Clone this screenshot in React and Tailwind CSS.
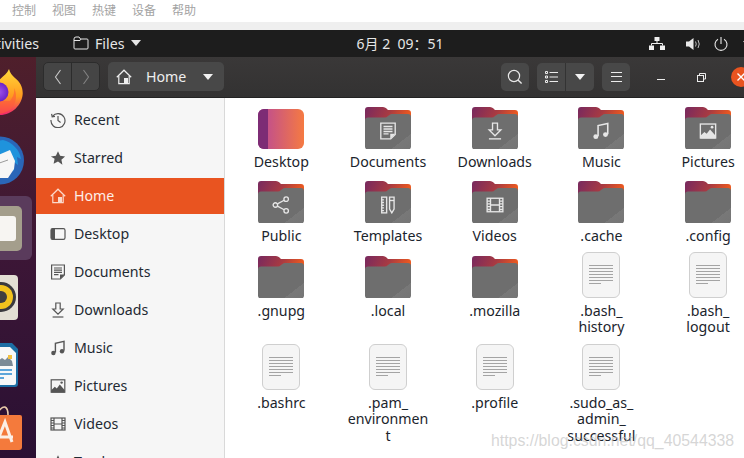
import React from "react";

const fontUi = { fontFamily: '"Noto Sans", "Noto Sans CJK SC", sans-serif' };

// symbolic glyphs, shared by sidebar and folders (16x16 box)
const Glyph = ({ name, size = 16, color = "#555" }) => {
  const s = { fill: "none", stroke: color, strokeWidth: 1.2 };
  const f = { fill: color };
  return (
    <svg width={size} height={size} viewBox="0 0 16 16">
      {name === "recent" && (
        <g {...s}>
          <path d="M2.6 4.2A7 7 0 1 1 1 8" />
          <path d="M1.6 1.8 2.2 4.8 5 4.4" />
          <path d="M8 4v4.4l2.6 2" />
        </g>
      )}
      {name === "star" && <path {...f} d="M8 1.2l2.1 4.6 5 .6-3.7 3.4 1 5L8 11.4l-4.4 2.4 1-5L.9 6.4l5-.6z" />}
      {name === "home" && (
        <g {...s}>
          <path d="M.8 8.2 8 1.2l7.2 7" />
          <path d="M2.8 7v7.6h10.4V7" />
          <path {...f} stroke="none" d="M8 9h4v5.6H8z" />
        </g>
      )}
      {name === "desktop" && (
        <g>
          <rect x="1" y="2.6" width="14" height="10.8" rx="1.6" {...s} />
          <path {...f} d="M1 4.2a1.6 1.6 0 0 1 1.6-1.6H5v10.8H2.6A1.6 1.6 0 0 1 1 11.8z" />
        </g>
      )}
      {name === "documents" && (
        <g {...s}>
          <path d="M1.6 1h12.8v10L10.4 15H1.6z" />
          <path d="M4 4h8M4 6.2h8M4 8.4h8M4 10.6h4.5" />
          <path {...f} stroke="none" d="M10 15v-4.6h4.4z" />
        </g>
      )}
      {name === "downloads" && (
        <g {...s}>
          <path d="M5.8 1h4.4v6h3L8 12.2 2.8 7h3z" />
          <path d="M2.6 15h10.8" />
        </g>
      )}
      {name === "music" && (
        <g>
          <path {...s} strokeWidth="1.4" d="M5.4 12.6V3.2L14 1.4v9.4" />
          <circle cx="3.4" cy="13" r="2.2" {...f} />
          <circle cx="12" cy="11.2" r="2.2" {...f} />
        </g>
      )}
      {name === "pictures" && (
        <g>
          <rect x="1.2" y="1.8" width="13.6" height="12.4" fill="none" stroke={color} strokeWidth="1.2" />
          <path {...f} d="M1.2 14.6v-2.4l3.6-3.4 2 1.6L9.8 6.6l5 5.6v2.4z" />
          <circle cx="11.6" cy="4.6" r="1.2" {...f} />
        </g>
      )}
      {name === "videos" && (
        <g {...s}>
          <rect x="1" y="2" width="14" height="12" />
          <path d="M4 2v12M12 2v12M4 8h8M1 4.5h3M1 7h3M1 9.5h3M1 12h3M12 4.5h3M12 7h3M12 9.5h3M12 12h3" />
        </g>
      )}
      {name === "share" && (
        <g {...s}>
          <circle cx="3" cy="8" r="2" />
          <circle cx="12.6" cy="2.8" r="2" />
          <circle cx="12.6" cy="13.2" r="2" />
          <path d="M4.8 7 10.8 3.8M4.8 9l6 3.2" />
        </g>
      )}
      {name === "templates" && (
        <g {...s}>
          <rect x="2.4" y="1" width="4.4" height="14" />
          <path d="M2.4 3.4h2M2.4 5.8h2M2.4 8.2h2M2.4 10.6h2M2.4 13h2" />
          <path d="M9.4 1h4v10.6l-2 3.4-2-3.4z" />
          <path d="M9.4 4h4" />
        </g>
      )}
    </svg>
  );
};

const Folder = ({ glyph }) => (
  <div className="relative w-[46px] h-[42px]">
    <svg width="46" height="42" viewBox="0 0 46 42" className="block">
      <defs>
        <linearGradient id="folderBack" x1="0" y1="0" x2="1" y2="0.25">
          <stop offset="0" stopColor="#77295f" />
          <stop offset="0.55" stopColor="#a83a42" />
          <stop offset="1" stopColor="#ee5a1e" />
        </linearGradient>
        <linearGradient id="folderFront" x1="0" y1="0" x2="1" y2="1">
          <stop offset="0.78" stopColor="#6e6e6e" />
          <stop offset="0.78" stopColor="#787878" />
          <stop offset="1" stopColor="#757575" />
        </linearGradient>
      </defs>
      <path fill="url(#folderBack)" d="M3 0h15q2 0 3.5 1.5L23 3h20q3 0 3 3v18H0V3q0-3 3-3z" />
      <path fill="url(#folderFront)" d="M3 10.500h17q1.500 0 3-1.500l1.500-1q1-1 2.500-1H43q3 0 3 3v29.500q0 3-3 3H3q-3 0-3-3V13.500q0-3 3-3z" />
    </svg>
    {glyph && (
      <div className="absolute left-0 right-0 top-[15px] flex justify-center">
        <Glyph name={glyph} size={18} color="#e6e6e6" />
      </div>
    )}
  </div>
);

const DesktopFolder = () => (
  <svg width="46" height="42" viewBox="0 0 46 42" className="block">
    <defs>
      <linearGradient id="deskGrad" x1="0" y1="0" x2="1" y2="0">
        <stop offset="0" stopColor="#b8479a" />
        <stop offset="1" stopColor="#f57a42" />
      </linearGradient>
      <clipPath id="deskClip">
        <rect x="0" y="2" width="46" height="40" rx="6" />
      </clipPath>
    </defs>
    <g clipPath="url(#deskClip)">
      <rect x="0" y="2" width="46" height="40" fill="url(#deskGrad)" />
      <rect x="0" y="2" width="10" height="40" fill="#7d2c75" />
    </g>
  </svg>
);

const FileIcon = () => (
  <div className="w-[38px] h-[46px] rounded-[6px] bg-[#f5f5f5] border border-[#cfcfcf] flex flex-col gap-[2px] pt-[12px] px-[6px]">
    {[0, 1, 2, 3, 4, 5].map((i) => (
      <div key={i} className="h-px w-full bg-[#a4a4a4]" />
    ))}
    <div className="h-px w-[12px] bg-[#a4a4a4]" />
  </div>
);

const items = [
  { lines: ["Desktop"], type: "desktop" },
  { lines: ["Documents"], type: "folder", glyph: "documents" },
  { lines: ["Downloads"], type: "folder", glyph: "downloads" },
  { lines: ["Music"], type: "folder", glyph: "music" },
  { lines: ["Pictures"], type: "folder", glyph: "pictures" },
  { lines: ["Public"], type: "folder", glyph: "share" },
  { lines: ["Templates"], type: "folder", glyph: "templates" },
  { lines: ["Videos"], type: "folder", glyph: "videos" },
  { lines: [".cache"], type: "folder" },
  { lines: [".config"], type: "folder" },
  { lines: [".gnupg"], type: "folder" },
  { lines: [".local"], type: "folder" },
  { lines: [".mozilla"], type: "folder" },
  { lines: [".bash_", "history"], type: "file" },
  { lines: [".bash_", "logout"], type: "file" },
  { lines: [".bashrc"], type: "file" },
  { lines: [".pam_", "environmen", "t"], type: "file" },
  { lines: [".profile"], type: "file" },
  { lines: [".sudo_as_", "admin_", "successful"], type: "file" },
];

const places = [
  { name: "Recent", icon: "recent" },
  { name: "Starred", icon: "star" },
  { name: "Home", icon: "home", active: true },
  { name: "Desktop", icon: "desktop" },
  { name: "Documents", icon: "documents" },
  { name: "Downloads", icon: "downloads" },
  { name: "Music", icon: "music" },
  { name: "Pictures", icon: "pictures" },
  { name: "Videos", icon: "videos" },
  { name: "Trash", icon: "star" },
];

const Caret = ({ color = "#f2f2f2", w = 10 }) => (
  <svg width={w} height="6" viewBox="0 0 10 6">
    <path d="M0 0h10L5 6z" fill={color} />
  </svg>
);

const Dock = () => (
  <div className="w-[36px] shrink-0 flex flex-col bg-gradient-to-b from-[#4f1f2b] via-[#3c1636] to-[#2a1033] overflow-hidden">
    <svg width="36" height="68" viewBox="0 0 36 68" className="shrink-0">
      <defs>
        <linearGradient id="ffox" x1="0" y1="0" x2="0" y2="1">
          <stop offset="0" stopColor="#ffd93a" />
          <stop offset="0.6" stopColor="#ff9a1f" />
          <stop offset="1" stopColor="#f0256e" />
        </linearGradient>
        <radialGradient id="ffoxBall">
          <stop offset="0" stopColor="#a052ea" />
          <stop offset="1" stopColor="#6a23c8" />
        </radialGradient>
      </defs>
      <path fill="url(#ffox)" d="M-2 24C2 20 7 17 9 12C10 16 12 18 15 21C20 25 23 30 22.700 37C22 48 12 58 0 58H-2z" />
      <path fill="#ff5a3a" d="M-2 44H10C13 40 15 36 14 31C18 38 16 50 8 54Q3 57-2 57z" opacity="0.6" />
      <circle cx="-1" cy="35" r="9.500" fill="url(#ffoxBall)" />
    </svg>
    <svg width="36" height="68" viewBox="0 0 36 68" className="shrink-0">
      <circle cx="0" cy="35.500" r="24" fill="#2a66b8" />
      <path fill="#1f93dc" d="M3 15C12 17 20 25 21 34L17 32 18 40 14 37 14 46 8 42 -2 52V16z" />
      <path fill="#f6f6f6" d="M-2 30 10 25 15 36 14 44 8 53H-2z" />
      <path d="M-2 38.500 8 35" stroke="#9a9a9a" strokeWidth="1" />
    </svg>
    <div className="w-[32px] h-[64px] mt-[3px] mb-[1px] shrink-0 bg-[#5a3b5c] rounded-r-[6px] overflow-hidden flex items-center">
      <div className="w-[22px] h-[45px] shrink-0 bg-[#a49e8c] rounded-r-[5px] flex items-center">
        <div className="w-[16px] h-[25px] bg-[#f7f5f2] rounded-r-[3px]" />
      </div>
    </div>
    <svg width="36" height="68" viewBox="0 0 36 68" className="shrink-0">
      <rect x="-20" y="14" width="38" height="45" rx="4" fill="#e3dfd4" />
      <circle cx="1" cy="36" r="15" fill="#3a3a3e" />
      <circle cx="1" cy="36" r="12" fill="#f2c31d" />
      <circle cx="1" cy="36" r="6" fill="#3f3f3f" />
    </svg>
    <svg width="36" height="68" viewBox="0 0 36 68" className="shrink-0">
      <path fill="#1c6ea4" d="M-3 14H12l6 6v35q0 3-3 3H-3z" />
      <path fill="#f7f8f8" d="M-3 18H10l6 6v30q0 2-2 2H-3z" />
      <path fill="#7a8a96" d="M-3 37V33L2 29l3 2 3-3 4 4 1 5z" />
      <rect x="8" y="26" width="4" height="4" fill="#f2c040" />
      <path d="M-3 41h15M-3 45h15M-3 49h7" stroke="#2a8ad0" strokeWidth="1.600" />
    </svg>
    <svg width="36" height="68" viewBox="0 0 36 68" className="shrink-0">
      <path d="M-4 18C4 5 8 10 8 18" fill="none" stroke="#e8c9a8" strokeWidth="1.600" />
      <path fill="#f47a3c" d="M-4 18H20q2 0 2 2v30q0 3-3 3H-4z" />
      <path d="M-3 45 5 25l7 20M-3 40h16" fill="none" stroke="#fbeee6" strokeWidth="3" />
    </svg>
  </div>
);

const NavChevron = ({ d, color }) => (
  <svg width="8" height="16" viewBox="0 0 8 16">
    <path d={d} fill="none" stroke={color} strokeWidth="1.1" />
  </svg>
);

const HeaderBar = () => (
  <div className="h-[41px] shrink-0 flex items-center pl-[7px] pb-[1px] bg-gradient-to-b from-[#3a3838] to-[#333232] border-b border-[#232323] overflow-hidden">
    <div className="w-[57px] h-[29px] shrink-0 flex rounded-[5px] border border-[#2c2c2c] bg-[#454545]">
      <div className="w-[28px] flex items-center justify-center border-r border-[#2c2c2c]">
        <NavChevron d="M6.500 1 1.500 8l5 7" color="#c8c8c8" />
      </div>
      <div className="flex-1 flex items-center justify-center">
        <NavChevron d="M1.500 1l5 7-5 7" color="#828282" />
      </div>
    </div>
    <div className="ml-[8px] w-[116px] h-[29px] shrink-0 rounded-[5px] bg-[#484848] flex items-center pl-[8px] text-[#eeeeee] text-[14.200px]">
      <Glyph name="home" size={16} color="#eeeeee" />
      <span className="ml-[14px]">Home</span>
      <span className="ml-auto mr-[11px] flex">
        <Caret />
      </span>
    </div>
    <div className="w-[277px] shrink-0" />
    <div className="w-[28px] h-[28px] shrink-0 rounded-[5px] bg-[#484848] flex items-center justify-center">
      <svg width="16" height="16" viewBox="0 0 16 16">
        <circle cx="7" cy="7" r="5.600" fill="none" stroke="#e8e8e8" strokeWidth="1.200" />
        <path d="M11 11l3.600 3.600" stroke="#e8e8e8" strokeWidth="1.400" />
      </svg>
    </div>
    <div className="ml-[8px] w-[57px] h-[28px] shrink-0 rounded-[5px] bg-[#484848] flex">
      <div className="w-[29px] flex items-center justify-center border-r border-[#333]">
        <svg width="13" height="12" viewBox="0 0 13 12">
          <path d="M4.500 1.500H13M4.500 6H13M4.500 10.500H13" stroke="#ececec" strokeWidth="1.100" />
          <path d="M.5 .5h2v2h-2zM.5 5h2v2h-2zM.5 9.500h2v2h-2z" fill="none" stroke="#ececec" />
        </svg>
      </div>
      <div className="flex-1 flex items-center justify-center">
        <Caret />
      </div>
    </div>
    <div className="ml-[8px] w-[28px] h-[28px] shrink-0 rounded-[5px] bg-[#484848] flex flex-col gap-[3.500px] items-center justify-center">
      <div className="w-[11px] h-px bg-[#ececec]" />
      <div className="w-[11px] h-px bg-[#ececec]" />
      <div className="w-[11px] h-px bg-[#ececec]" />
    </div>
    <div className="ml-[11px] w-[40px] h-[28px] shrink-0 flex items-center justify-center">
      <div className="w-[8px] h-[1.500px] bg-[#ececec] mt-[6px]" />
    </div>
    <div className="w-[40px] h-[28px] shrink-0 flex items-center justify-center">
      <svg width="9" height="9" viewBox="0 0 9 9" className="mt-[1px]">
        <path d="M2.500 2.500V.5h6v5.500H6.500" fill="none" stroke="#ececec" />
        <rect x=".5" y="2.500" width="6" height="6" fill="none" stroke="#ececec" />
      </svg>
    </div>
    <div className="ml-[10px] w-[20px] h-[20px] shrink-0 rounded-full bg-[#e95420] flex items-center justify-center">
      <svg width="8" height="8" viewBox="0 0 8 8">
        <path d="M.5 .5l7 7M7.500 .5l-7 7" stroke="#fff" strokeWidth="1.400" />
      </svg>
    </div>
  </div>
);

const Sidebar = () => (
  <div className="w-[189px] shrink-0 bg-[#f6f6f6] border-r border-[#d9d9d9] pt-[4px] flex flex-col gap-[2px] overflow-hidden">
    {places.map((p) => (
      <div
        key={p.name}
        className={
          p.active
            ? "h-[36px] shrink-0 flex items-center pl-[14px] gap-[8px] bg-[#e95420] text-[#fdeee8]"
            : "h-[36px] shrink-0 flex items-center pl-[14px] gap-[8px] text-[#1f2a33]"
        }
      >
        <Glyph name={p.icon} color={p.active ? "#fbd9cb" : "#555"} />
        <span className="text-[14.200px]">{p.name}</span>
      </div>
    ))}
  </div>
);

const Grid = () => (
  <div className="flex-1 bg-white pl-[3px] pt-[5px] overflow-hidden">
    <div className="grid grid-cols-[repeat(5,106.700px)] grid-rows-[74px_75px_92px_auto] w-[534px]">
      {items.map((it) => (
        <div key={it.lines.join("")} className="flex flex-col items-center">
          <div className="h-[46px] flex items-end justify-center">
            {it.type === "desktop" && <DesktopFolder />}
            {it.type === "folder" && <Folder glyph={it.glyph} />}
            {it.type === "file" && <FileIcon />}
          </div>
          <div className="mt-[4.500px] text-center text-[14.200px] leading-[16.700px] text-[#1b242c] whitespace-nowrap">
            {it.lines.map((l) => (
              <div key={l}>{l}</div>
            ))}
          </div>
        </div>
      ))}
    </div>
  </div>
);

export default function App() {
  return (
    <div className="relative w-[744px] h-[458px] overflow-hidden flex flex-col bg-white" style={fontUi}>
      <div className="h-[22px] shrink-0 bg-white flex items-center gap-[16px] pl-[12px] text-[12px] text-[#a3a3a3]">
        <span>控制</span>
        <span>视图</span>
        <span>热键</span>
        <span>设备</span>
        <span>帮助</span>
      </div>
      <div className="h-[8px] shrink-0 bg-[#efefef]" />
      <div className="h-[27px] shrink-0 bg-[#1d1d1d] flex items-center text-[14.200px] text-[#e6e6e6]">
        <div className="w-[350px] shrink-0 flex items-center">
          <div className="w-[39px] flex justify-end overflow-hidden">
            <span className="shrink-0">Activities</span>
          </div>
          <svg width="16" height="14" viewBox="0 0 16 14" className="ml-[34px]">
            <path d="M1 3q0-2 2-2h3l1.500 2H14q1 0 1 1v8q0 1-1 1H2q-1 0-1-1z" fill="none" stroke="#e6e6e6" strokeWidth="1" />
            <path d="M1 4.500h6l1-1.500" fill="none" stroke="#e6e6e6" strokeWidth="1" />
          </svg>
          <span className="ml-[6px]">Files</span>
          <span className="ml-[7px] flex">
            <Caret color="#e6e6e6" />
          </span>
        </div>
        <div className="w-[100px] shrink-0 text-center whitespace-pre text-[14px]">6月 2  09：51</div>
        <div className="ml-[199px] shrink-0 flex items-center">
          <svg width="16" height="13" viewBox="0 0 16 13">
            <path d="M5.500 0h5v4h-5zM0 8.500h5V13H0zM11 8.500h5V13h-5z" fill="#f0f0f0" />
            <path d="M8 4v2.500M2.500 8.500V6.500h11v2" fill="none" stroke="#f0f0f0" />
          </svg>
          <svg width="15" height="14" viewBox="0 0 15 14" className="ml-[21px]">
            <path d="M0 4.500h3L7.500 1v12L3 9.500H0z" fill="#e8e8e8" />
            <path d="M9.500 4.500q1.500 2.500 0 5M12 3q2.500 4 0 8" fill="none" stroke="#bdbdbd" />
          </svg>
          <svg width="14" height="14" viewBox="0 0 14 14" className="ml-[13px]">
            <path d="M4 2.200a6 6 0 1 0 6 0M7 0v7" fill="none" stroke="#e8e8e8" strokeWidth="1.100" />
          </svg>
          <span className="ml-[15px] flex">
            <Caret color="#e8e8e8" />
          </span>
        </div>
      </div>
      <div className="flex-1 flex min-h-0">
        <Dock />
        <div className="flex-1 min-w-0 flex flex-col">
          <HeaderBar />
          <div className="flex-1 flex min-h-0">
            <Sidebar />
            <Grid />
          </div>
        </div>
      </div>
      <div
        className="absolute left-[491px] top-[431px] text-[15.850px] leading-[20px] text-[#c4c4c4]/70 whitespace-nowrap"
        style={{ fontFamily: '"Liberation Sans", sans-serif' }}
      >
        https://blog.csdn.net/qq_40544338
      </div>
    </div>
  );
}
